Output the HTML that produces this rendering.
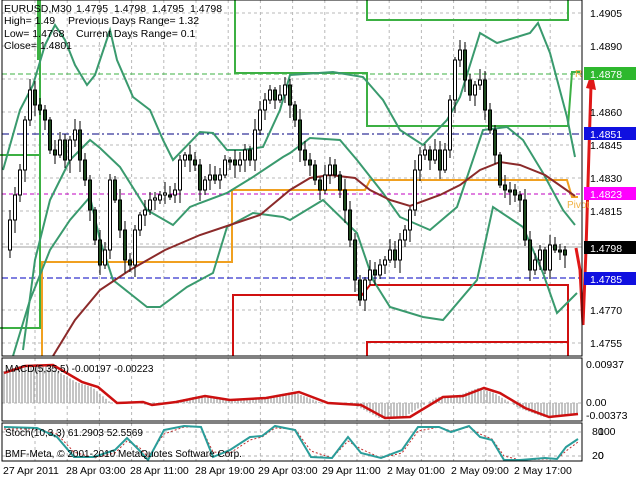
<!DOCTYPE html>
<html><head><meta charset="utf-8"><style>
html,body{margin:0;padding:0;background:#fff;width:640px;height:480px;overflow:hidden}
svg{display:block;font-family:"Liberation Sans",sans-serif}
</style></head><body>
<svg id="s" width="640" height="480" viewBox="0 0 640 480" xmlns="http://www.w3.org/2000/svg">
<rect width="640" height="480" fill="#fff"/>
<g id="grid" stroke="#b8b8b8" stroke-width="1" stroke-dasharray="3,3"></g>
<line x1="2" y1="74" x2="582" y2="74" stroke="#3cb043" stroke-dasharray="5,3"/>
<line x1="2" y1="134" x2="582" y2="134" stroke="#000080" stroke-dasharray="7,3,2,3"/>
<line x1="2" y1="194" x2="582" y2="194" stroke="#c000c0" stroke-dasharray="4,3"/>
<line x1="2" y1="247" x2="582" y2="247" stroke="#a0a0a0"/>
<line x1="2" y1="278" x2="582" y2="278" stroke="#0000c0" stroke-dasharray="6,3"/>
<polyline fill="none" stroke="#f0a020" stroke-width="2" points="42,356 42,262 232,262 232,190 365,190 370,180 567,180 572,197 578,197"/>
<polyline fill="none" stroke="#3cb043" stroke-width="2" points="0,328 40,328 40,20"/>
<polyline fill="none" stroke="#3cb043" stroke-width="4" points="39,60 39,0"/>
<polyline fill="none" stroke="#3cb043" stroke-width="2" points="0,155 40,155"/>
<polyline fill="none" stroke="#3cb043" stroke-width="2" points="235,0 235,73 367,73 367,126 568,126 572,72 580,72"/>
<polyline fill="none" stroke="#3cb043" stroke-width="2" points="367,0 367,20 568,20 568,0"/>
<polyline fill="none" stroke="#d01010" stroke-width="2" points="233,356 233,295 362,295 370,285 568,285 568,356"/>
<polyline fill="none" stroke="#d01010" stroke-width="2" points="367,356 367,342 568,342 568,356"/>
<g fill="none" stroke="#3a9a6e" stroke-width="2">
<polyline points="3,170 20,110 33,85 45,45 55,25 65,40 75,65 87,85 95,75 100,60 110,30 117,60 133,97 150,110 163,140 173,160 200,132 213,133 227,150 243,150 263,147 280,110 290,75 333,72 363,77 383,100 400,130 423,145 447,120 460,97 480,33 497,43 530,33 538,23 550,53 567,117 575,157"/>
<polyline points="23,350 35,260 50,200 70,160 90,140 100,148 120,167 147,210 173,225 190,207 200,203 227,193 253,177 283,157 290,153 310,138 340,140 357,160 383,193 400,217 430,230 457,207 483,130 507,127 523,140 543,173 563,210 575,225"/>
<polyline points="13,356 30,300 50,250 70,220 90,197 100,240 113,280 147,307 160,307 187,287 213,273 227,227 253,213 283,217 290,220 323,200 357,233 373,280 390,307 423,317 443,320 477,280 493,207 523,227 543,273 557,313 577,293"/>
</g>
<polyline fill="none" stroke="#8b2a2a" stroke-width="2" points="53,356 75,320 100,290 130,270 165,250 200,235 230,225 260,215 290,190 310,178 330,175 355,178 370,190 390,200 410,206 440,195 460,185 480,170 500,162 520,165 545,175 575,196"/>
<g id="candles"></g>
<polyline fill="none" stroke="#e01818" stroke-width="3" points="576,248 580,270 583,325 586,250 589,150 591,85"/>
<polygon points="586,88 592,70 596,90" fill="#e01818"/>
<text x="567" y="208" font-size="10" fill="#f0b040">Pivot</text>
<text x="575" y="77" font-size="10" fill="#f0b040">R 1</text>
<rect x="2" y="0" width="580" height="356" fill="none" stroke="#000"/>
<g font-size="10.5" fill="#000">
<text x="590" y="17">1.4905</text><text x="590" y="50">1.4890</text>
<text x="590" y="116">1.4860</text><text x="590" y="149">1.4845</text>
<text x="590" y="182">1.4830</text><text x="590" y="215">1.4815</text>
<text x="590" y="314">1.4770</text><text x="590" y="347">1.4755</text>
</g>
<g font-size="10.5" fill="#fff">
<rect x="584" y="67" width="52" height="13" fill="#2eb82e"/><text x="590" y="78">1.4878</text>
<rect x="584" y="127" width="52" height="13" fill="#1010e0"/><text x="590" y="138">1.4851</text>
<rect x="584" y="187" width="52" height="13" fill="#ff00ff"/><text x="590" y="198">1.4823</text>
<rect x="584" y="241" width="52" height="13" fill="#000"/><text x="590" y="252">1.4798</text>
<rect x="584" y="272" width="52" height="13" fill="#1010e0"/><text x="590" y="283">1.4785</text>
</g>
<g font-size="10.5" fill="#000">
<text x="4" y="12">EURUSD,M30</text><text x="76" y="12">1.4795</text><text x="114" y="12">1.4798</text><text x="152" y="12">1.4795</text><text x="190" y="12">1.4798</text>
<text x="4" y="24">High= 1.49</text><text x="68" y="24">Previous Days Range= 1.32</text>
<text x="4" y="37">Low= 1.4768</text><text x="76" y="37">Current Days Range= 0.1</text>
<text x="4" y="49">Close= 1.4801</text>
</g>
<g id="hist" stroke="#b0b0b0" stroke-width="1.5"></g>
<line x1="2" y1="403" x2="582" y2="403" stroke="#b0b0b0" stroke-dasharray="3,3"/>
<polyline id="macd" fill="none" stroke="#cc1010" stroke-width="2.5" points="4,373 25,366 53,365 82,382 98,387 117,403 143,402 152,405 176,402 205,396 230,400 266,398 299,392 328,403 361,405 385,418 410,417 443,397 463,396 484,388 500,393 525,408 549,417 578,414"/>
<rect x="2" y="358" width="580" height="63" fill="none" stroke="#000"/>
<text x="5" y="372" font-size="10" fill="#000">MACD(5,35,5) -0.00197 -0.00223</text>
<g font-size="10.5" fill="#000"><text x="586" y="368">0.00937</text><text x="586" y="406">0.00</text><text x="586" y="419">-0.00373</text></g>
<line x1="2" y1="432" x2="582" y2="432" stroke="#b0b0b0" stroke-dasharray="3,3"/>
<line x1="2" y1="456" x2="582" y2="456" stroke="#b0b0b0" stroke-dasharray="3,3"/>
<polyline fill="none" stroke="#c03030" stroke-width="1" stroke-dasharray="2,2" points="4,429 37,429 57,434 74,452 94,458 115,453 127,441 139,447 148,457 164,434 184,427 201,427 213,452 230,453 250,440 262,437 275,428 295,429 311,451 332,458 348,441 361,449 381,458 402,453 418,431 439,427 451,431 469,427 480,434 492,439 504,456 520,460 545,459 557,459 566,451 578,442"/>
<polyline fill="none" stroke="#2a9d9a" stroke-width="2" points="4,427 37,428 57,437 74,457 94,457 115,450 127,438 139,450 148,460 164,430 184,426 201,427 213,457 230,450 250,437 262,436 275,426 295,430 311,457 332,458 348,437 361,453 381,458 402,450 418,427 439,427 451,432 469,426 480,437 492,440 504,460 520,460 545,458 557,459 566,447 578,439"/>
<rect x="2" y="423" width="580" height="38" fill="none" stroke="#000"/>
<text x="5" y="436" font-size="10" fill="#000">Stoch(10,3,3) 61.2903 52.5569</text>
<text x="5" y="457" font-size="10" fill="#000">BMF-Meta, © 2001-2010 MetaQuotes Software Corp.</text>
<g font-size="10.5" fill="#000"><text x="598" y="435">100</text><text x="592" y="435">80</text><text x="598" y="459">0</text><text x="592" y="459">20</text></g>
<g font-size="10.5" fill="#000">
<text x="3" y="474">27 Apr 2011</text><text x="66" y="474">28 Apr 03:00</text><text x="130" y="474">28 Apr 11:00</text>
<text x="195" y="474">28 Apr 19:00</text><text x="258" y="474">29 Apr 03:00</text><text x="322" y="474">29 Apr 11:00</text>
<text x="387" y="474">2 May 01:00</text><text x="451" y="474">2 May 09:00</text><text x="514" y="474">2 May 17:00</text>
</g>
</svg>
<script>
(function(){
var NS="http://www.w3.org/2000/svg";
function el(p,n,a){var e=document.createElementNS(NS,n);for(var k in a)e.setAttribute(k,a[k]);p.appendChild(e);return e;}
var g=document.getElementById("grid");
for(var x=35;x<582;x+=32.2)el(g,"line",{x1:x,y1:0,x2:x,y2:356});
[13,46,79,112,145,178,211,244,310,343].forEach(function(y){el(g,"line",{x1:2,y1:y,x2:582,y2:y});});
for(var x=35;x<582;x+=32.2){el(g,"line",{x1:x,y1:358,x2:x,y2:421});el(g,"line",{x1:x,y1:423,x2:x,y2:461});}
var ys=[250,220,195,170,120,90,105,110,120,150,155,140,160,140,130,160,180,210,240,265,250,180,200,230,260,265,230,215,210,200,200,195,195,195,190,160,155,160,165,190,180,175,180,175,160,160,165,160,150,160,130,110,100,90,100,95,85,105,120,150,160,165,180,190,175,165,175,190,210,240,280,300,280,270,275,265,260,250,260,240,230,210,170,155,150,160,150,170,150,100,60,50,80,95,85,80,110,130,155,185,190,190,195,200,240,270,260,250,270,245,250,250,255];
var c=document.getElementById("candles");
for(var i=1;i<ys.length;i++){
 var x=5+i*5,o=ys[i-1],cl=ys[i];
 if(Math.abs(o-cl)<2){cl=o+((i%2)?2:-2);}
 var top=Math.min(o,cl),bot=Math.max(o,cl);
 var wt=top-(3+(i*7)%9),wb=bot+(3+(i*5)%11);
 el(c,"line",{x1:x,y1:wt,x2:x,y2:wb,stroke:"#000","stroke-width":1});
 el(c,"rect",{x:x-1.5,y:top,width:3,height:bot-top,fill:cl>o?"#1e4a1e":"#fff",stroke:"#000","stroke-width":1});
}
var pts=document.getElementById("macd").getAttribute("points").trim().split(/\s+/).map(function(p){return p.split(",").map(Number);});
var h=document.getElementById("hist");
for(var x=4;x<578;x+=3){
 var xx=x+6,y=403;
 for(var j=0;j<pts.length-1;j++){if(xx>=pts[j][0]&&xx<=pts[j+1][0]){var t=(xx-pts[j][0])/(pts[j+1][0]-pts[j][0]);y=pts[j][1]+t*(pts[j+1][1]-pts[j][1]);break;}}
 if(xx>578)y=414;
 el(h,"line",{x1:x,y1:403,x2:x,y2:y});
}
})();
</script>
</body></html>
